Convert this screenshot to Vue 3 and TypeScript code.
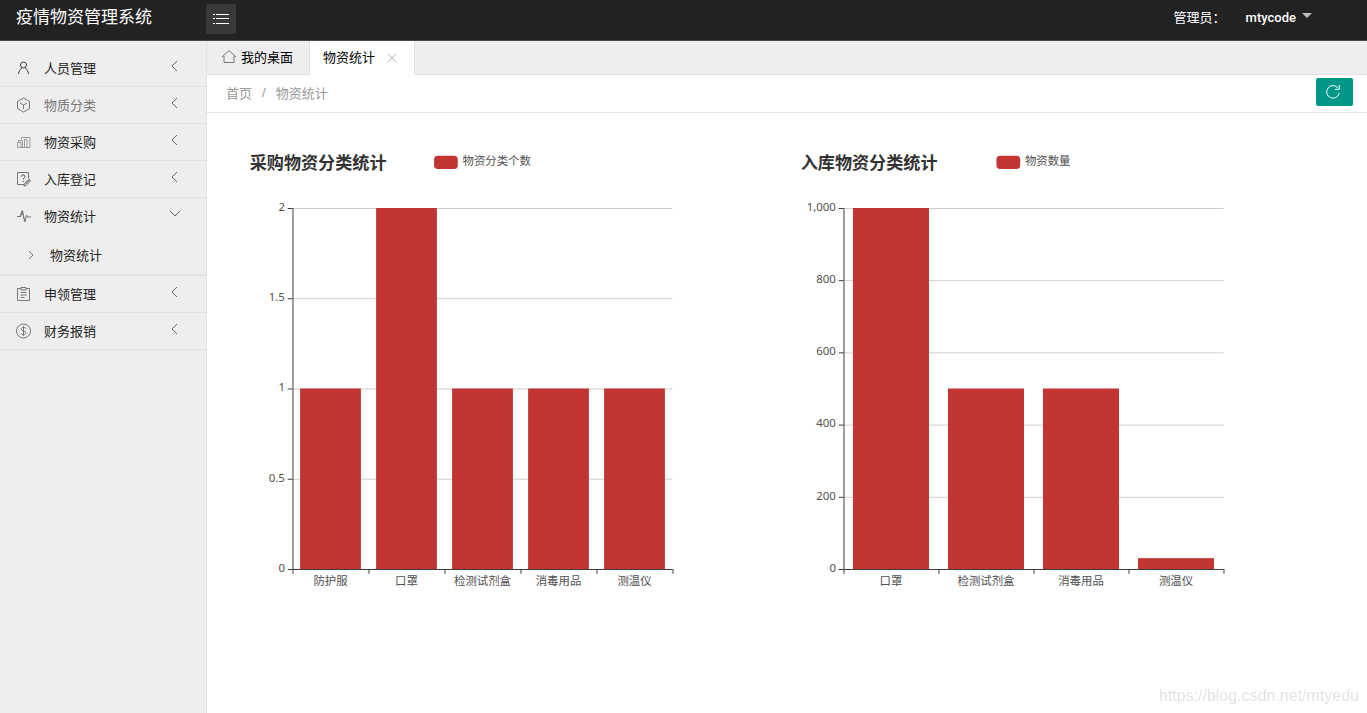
<script setup lang="ts">
import { ref } from 'vue'

interface MenuItem {
  icon: string
  label: string
  muted?: boolean
  children?: string[]
}

interface Chart {
  title: string
  legend: string
  legendX: number
  max: number
  ticks: { value: number; label: string }[]
  bars: { name: string; value: number }[]
}

const menu: MenuItem[] = [
  { icon: 'user', label: '人员管理' },
  { icon: 'cube', label: '物质分类', muted: true },
  { icon: 'stock', label: '物资采购' },
  { icon: 'form', label: '入库登记' },
  { icon: 'pulse', label: '物资统计', children: ['物资统计'] },
  { icon: 'board', label: '申领管理' },
  { icon: 'money', label: '财务报销' },
]

const openItem = ref('物资统计')
const toggle = (label: string) => {
  openItem.value = openItem.value === label ? '' : label
}

const charts: Chart[] = [
  {
    title: '采购物资分类统计',
    legend: '物资分类个数',
    legendX: 199,
    max: 2,
    ticks: [
      { value: 0, label: '0' },
      { value: 0.5, label: '0.5' },
      { value: 1, label: '1' },
      { value: 1.5, label: '1.5' },
      { value: 2, label: '2' },
    ],
    bars: [
      { name: '防护服', value: 1 },
      { name: '口罩', value: 2 },
      { name: '检测试剂盒', value: 1 },
      { name: '消毒用品', value: 1 },
      { name: '测温仪', value: 1 },
    ],
  },
  {
    title: '入库物资分类统计',
    legend: '物资数量',
    legendX: 211,
    max: 1000,
    ticks: [
      { value: 0, label: '0' },
      { value: 200, label: '200' },
      { value: 400, label: '400' },
      { value: 600, label: '600' },
      { value: 800, label: '800' },
      { value: 1000, label: '1,000' },
    ],
    bars: [
      { name: '口罩', value: 1000 },
      { name: '检测试剂盒', value: 500 },
      { name: '消毒用品', value: 500 },
      { name: '测温仪', value: 30 },
    ],
  },
]

const LEFT = 50
const BOTTOM = 440
const PLOT_W = 400
const PLOT_H = 380

const yOf = (c: Chart, v: number) => BOTTOM - (v / c.max) * PLOT_H
const band = (c: Chart) => PLOT_W / c.bars.length
const barX = (c: Chart, i: number) => LEFT + band(c) * (i + 0.1)
const midX = (c: Chart, i: number) => LEFT + band(c) * (i + 0.5)
</script>

<template>
  <div class="app">
    <header class="topbar">
      <h1 class="brand">疫情物资管理系统</h1>
      <button class="collapse" type="button" aria-label="切换菜单">
        <svg width="16" height="12" viewBox="0 0 16 12" fill="#fff">
          <path d="M0 1h2v1H0zM3 1h13v1H3zM0 5h2v1H0zM3 5h13v1H3zM0 10h2v1H0zM3 10h13v1H3z" />
        </svg>
      </button>
      <div class="account">
        <span>管理员：</span>
        <button class="user" type="button">mtycode<i class="caret"></i></button>
      </div>
    </header>

    <div class="body">
      <nav class="side">
        <ul>
          <li v-for="m in menu" :key="m.label">
            <button class="item" :class="{ muted: m.muted }" type="button" @click="toggle(m.label)">
              <svg class="icon" viewBox="0 0 16 16" width="16" height="16" aria-hidden="true">
                <g v-if="m.icon === 'user'" class="dark">
                  <circle cx="7.500" cy="5" r="3" />
                  <path d="M2.500 14C2.800 11 4.300 9 6 7.800M9 7.800C11 9 12.200 11.300 12.500 14" />
                </g>
                <g v-else-if="m.icon === 'cube'">
                  <path d="M7.500 1l6 3.500v7l-6 3.500-6-3.500v-7z" />
                  <path d="M4 6l3.500 2L11 6M7.500 8v4" />
                </g>
                <g v-else-if="m.icon === 'stock'" class="light">
                  <path d="M1.500 8.500H5v5H1.500zM2.500 8.500V6.500h4v7M5.500 5V3.500h8.500v10H5M8.500 13V5.500H11V13" />
                </g>
                <g v-else-if="m.icon === 'form'">
                  <path d="M8 13.500H1.500v-12h11v6" />
                  <path class="dark" d="M5.500 5.500c0-2 3.500-2 3.500 0 0 1.500-1.800 1.500-1.800 3M7.200 10v1" />
                  <path d="M13 8.200l1.700 1.600-4.500 4.700-2.200.600.500-2.300zM9.500 13.300l4-4M9 12.500l4-4" />
                </g>
                <g v-else-if="m.icon === 'pulse'">
                  <path d="M1 8.500h3L6 3l3 11 1.500-7 1.200 2H15" />
                  <path d="M4.500 9L6.500 2.500l2 10.500" />
                </g>
                <g v-else-if="m.icon === 'board'">
                  <path d="M5 2.500H1.500v12h12v-12H10" />
                  <path d="M5 1.500h5v2.500H5zM4.500 6.500h6M4.500 9h6M4.500 11.500h4" />
                </g>
                <g v-else>
                  <circle cx="7.500" cy="8" r="7" />
                  <path d="M10 5.500C9.500 3.800 5.200 3.800 5.200 6.200c0 2.300 4.900 1.400 4.900 3.700 0 2.300-4.600 2.300-5.100.400M7.500 3v10" />
                </g>
              </svg>
              <span class="label">{{ m.label }}</span>
              <svg v-if="openItem === m.label && m.children" class="arrow" viewBox="0 0 12 12" width="12" height="12">
                <path d="M1 3l5 5 5-5" />
              </svg>
              <svg v-else class="arrow" viewBox="0 0 12 12" width="12" height="12">
                <path d="M8 1L3 6l5 5" />
              </svg>
            </button>
            <ul v-if="m.children && openItem === m.label" class="sub">
              <li v-for="c in m.children" :key="c">
                <a href="#">
                  <svg viewBox="0 0 8 10" width="8" height="10"><path d="M2 1l4 4-4 4" /></svg>
                  <span class="label">{{ c }}</span>
                </a>
              </li>
            </ul>
          </li>
        </ul>
      </nav>

      <main class="content">
        <div class="tabs">
          <a class="tab" href="#">
            <svg viewBox="0 0 16 16" width="16" height="16" aria-hidden="true">
              <path d="M1 8l7-6.500L15 8M3 7v6.500h10V7" />
            </svg>
            <span class="label">我的桌面</span>
          </a>
          <div class="tab active">
            <span class="label">物资统计</span>
            <button class="close" type="button" aria-label="关闭">
              <svg viewBox="0 0 10 10" width="10" height="10"><path d="M1 1l8 8M9 1L1 9" /></svg>
            </button>
          </div>
        </div>

        <div class="crumbs">
          <a class="label" href="#">首页</a>
          <span class="label sep">/</span>
          <span class="label">物资统计</span>
          <button class="refresh" type="button" aria-label="刷新">
            <svg viewBox="0 0 16 16" width="16" height="16">
              <path d="M14.200 9A6.300 6.300 0 1 1 12.800 3.800M14.300 1v4.300H10" />
            </svg>
          </button>
        </div>

        <section class="charts">
          <svg v-for="c in charts" :key="c.title" class="chart" viewBox="0 0 500 500" role="img" :aria-label="c.title">
            <text class="title" x="5" y="19">{{ c.title }}</text>
            <rect class="bar" :x="c.legendX" y="5" width="25" height="14" rx="4" />
            <text :x="c.legendX + 30" y="15">{{ c.legend }}</text>

            <rect
              v-for="t in c.ticks.slice(1)"
              :key="'g' + t.label"
              class="grid"
              :x="LEFT"
              :y="yOf(c, t.value)"
              :width="PLOT_W"
              height="1"
            />
            <rect
              v-for="(b, i) in c.bars"
              :key="b.name"
              class="bar"
              :x="barX(c, i)"
              :y="yOf(c, b.value)"
              :width="band(c) * 0.8"
              :height="BOTTOM - yOf(c, b.value)"
            />

            <rect class="axis" :x="LEFT" y="60" width="1" height="380" />
            <rect class="axis" :x="LEFT" :y="BOTTOM" :width="PLOT_W" height="1" />
            <g v-for="t in c.ticks" :key="'t' + t.label">
              <rect class="axis" x="45" :y="yOf(c, t.value)" width="5" height="1" />
              <text class="end" x="42" :y="yOf(c, t.value) + 3">{{ t.label }}</text>
            </g>
            <rect
              v-for="n in c.bars.length + 1"
              :key="'x' + n"
              class="axis"
              :x="LEFT + band(c) * (n - 1)"
              :y="BOTTOM"
              width="1"
              height="5"
            />
            <text v-for="(b, i) in c.bars" :key="'l' + b.name" class="mid" :x="midX(c, i)" y="457">{{ b.name }}</text>
          </svg>
        </section>
      </main>
    </div>
    <div class="watermark">https://blog.csdn.net/mtyedu</div>
  </div>
</template>

<style>
body {
  margin: 0;
}
</style>

<style scoped>
.app {
  display: flex;
  flex-direction: column;
  min-height: 100vh;
  background: #fff;
  color: #222;
  font-family: 'Liberation Sans', 'Noto Sans CJK SC', sans-serif;
  font-size: 13px;
}
.app * {
  box-sizing: border-box;
}
button {
  border: 0;
  padding: 0;
  margin: 0;
  background: none;
  font: inherit;
  color: inherit;
  cursor: pointer;
}
a {
  color: inherit;
  text-decoration: none;
}
ul {
  list-style: none;
  margin: 0;
  padding: 0;
}
svg {
  display: block;
  flex: none;
}
.label {
  padding-bottom: 2px;
}

.topbar {
  display: flex;
  align-items: flex-start;
  height: 41px;
  background: #222;
  border-bottom: 1px solid #484848;
  color: #fff;
}
.brand {
  width: 206px;
  margin: 0;
  padding-left: 16px;
  font-size: 17px;
  font-weight: 400;
  line-height: 36px;
}
.collapse {
  display: flex;
  align-items: center;
  justify-content: center;
  width: 30px;
  height: 30px;
  margin-top: 4px;
  border-radius: 2px;
  background: #393939;
}
.account {
  display: flex;
  align-items: center;
  gap: 20px;
  height: 32px;
  margin-left: auto;
  padding-right: 55px;
}
.user {
  display: flex;
  align-items: center;
  gap: 6px;
  padding-top: 2px;
  font-family: Roboto, 'Noto Sans CJK SC', sans-serif;
  font-weight: 500;
}
.caret {
  margin-bottom: 3px;
  border: 5px solid transparent;
  border-top-color: #bbb;
  border-bottom: 0;
}

.body {
  display: flex;
  flex: 1;
}
.side {
  flex: none;
  width: 207px;
  padding-top: 9px;
  background: #eee;
  border-right: 1px solid #e2e2e2;
}
.side > ul > li {
  border-bottom: 1px solid #e2e2e2;
}
.item {
  display: flex;
  align-items: center;
  width: 100%;
  height: 36px;
  padding: 0 25px 0 16px;
  text-align: left;
}
.item.muted {
  color: #777;
}
.item .label {
  flex: 1;
}
.icon {
  margin-right: 12px;
  fill: none;
  stroke: #777;
}
.icon .dark {
  stroke: #444;
}
.icon .light {
  stroke: #999;
}
.arrow {
  margin-bottom: 4px;
  fill: none;
  stroke: #666;
}
.sub li {
  border-bottom: 1px solid #e2e2e2;
}
.sub a {
  display: flex;
  align-items: center;
  gap: 15px;
  height: 40px;
  padding: 2px 0 0 27px;
}
.sub svg {
  fill: none;
  stroke: #777;
}

.content {
  flex: 1;
  min-width: 0;
}
.tabs {
  display: flex;
  height: 34px;
  background: #eeeef0;
  border-bottom: 1px solid #e2e2e2;
  color: #000;
}
.tab {
  display: flex;
  align-items: center;
  gap: 4px;
  height: 34px;
  padding: 0 16px 2px 14px;
  border-right: 1px solid #e2e2e2;
}
.tab svg {
  fill: none;
  stroke: #777;
}
.tab.active {
  gap: 9px;
  padding: 0 14px 2px 13px;
  background: #fff;
}
.close {
  padding: 5px 3px 3px;
}
.tab .close svg {
  stroke: #bbb;
}
.crumbs {
  display: flex;
  align-items: center;
  height: 38px;
  padding: 0 14px 0 19px;
  border-bottom: 1px solid #e2e2e2;
  color: #999;
}
.sep {
  margin: 0 10px;
}
.refresh {
  display: flex;
  align-items: center;
  justify-content: center;
  width: 37px;
  height: 28px;
  margin: 0 0 3px auto;
  padding-right: 3px;
  border-radius: 2px;
  background: #009688;
}
.refresh svg {
  fill: none;
  stroke: #fff;
}

.charts {
  display: grid;
  grid-template-columns: 1fr 1fr;
  padding: 38px 20px 38px 38px;
}
.chart {
  width: 100%;
  max-width: 475px;
  font-family: 'Noto Sans', 'Noto Sans CJK SC', sans-serif;
  font-size: 12px;
  fill: #505050;
}
.title {
  font-size: 18px;
  font-weight: 700;
  fill: #333;
}
.bar {
  fill: #c23531;
}
.grid {
  fill: #ccc;
}
.axis {
  fill: #333;
}
.end {
  text-anchor: end;
}
.mid {
  text-anchor: middle;
}
.watermark {
  position: fixed;
  right: 8px;
  bottom: 8px;
  font-size: 16px;
  line-height: 18px;
  color: #e4e4e4;
  pointer-events: none;
}
</style>
